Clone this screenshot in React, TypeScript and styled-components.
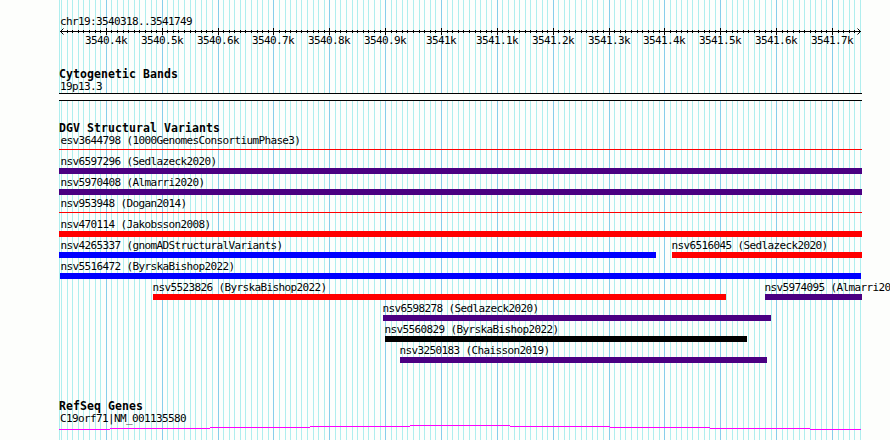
import React from "react";
import styled, { createGlobalStyle } from "styled-components";

const START = 3540318;
const END = 3541750;
const LEFT = 60;
const SPAN = 800;
const toX = (bp: number) => Math.round(LEFT + ((bp - START) * SPAN) / (END - START));

const marks: { bp: number; x: number; major: boolean }[] = [];
for (let bp = 3540320; bp <= END; bp += 10) {
  marks.push({ bp, x: toX(bp), major: bp % 100 === 0 });
}

const GlobalStyle = createGlobalStyle`
  body { margin: 0; background: #fdfefc; }
`;

const Browser = styled.main`
  position: relative;
  isolation: isolate;
  width: 890px;
  height: 440px;
  overflow: hidden;
  background: #fdfefc;
  color: #000;
  font: 11px/17px "DejaVu Sans Mono", monospace;
  letter-spacing: -0.623px;
  white-space: pre;
`;

const GridLines = styled.svg`
  position: absolute;
  inset: 0;
  z-index: -1;
`;

const Region = styled.div`
  height: 15px;
  padding: 13px 0 0 60px;
`;

const Axis = styled.svg`
  display: block;
  width: 890px;
  height: 22px;
`;

const Track = styled.section<{ $gap: number }>`
  margin-top: ${(p) => p.$gap}px;
`;

const Title = styled.h2`
  margin: 0;
  height: 12px;
  padding-left: 59px;
  font: bold 11.5px/16px "DejaVu Sans Mono", monospace;
  letter-spacing: 0.077px;
`;

const Caption = styled.div`
  height: 15px;
  padding-left: 60px;
`;

const Band = styled.div`
  box-sizing: border-box;
  width: 803px;
  height: 8px;
  margin-left: 59px;
  border: solid #000;
  border-width: 1px 0;
  background: #fdfefc;
`;

const Row = styled.div`
  display: flex;
  height: 21px;
`;

const Variant = styled.div<{ $gap: number; $width: number }>`
  flex: none;
  width: ${(p) => p.$width}px;
  margin-left: ${(p) => p.$gap}px;
`;

const Label = styled.div<{ $shift: number }>`
  height: 15px;
  margin-left: ${(p) => p.$shift}px;
`;

const Bar = styled.div<{ $color: string; $thin?: boolean }>`
  height: ${(p) => (p.$thin ? 1 : 6)}px;
  margin-top: ${(p) => (p.$thin ? 2 : 0)}px;
  background: ${(p) => p.$color};
`;

const GenePlot = styled.svg`
  display: block;
  width: 890px;
  height: 15px;
`;

const RED = "#ff0000";
const BLUE = "#0000ff";
const PURPLE = "#4b0082";

type Item = { name: string; from: number; to: number; color: string; thin?: boolean };

const rows: Item[][] = [
  [{ name: "esv3644798 (1000GenomesConsortiumPhase3)", from: 59, to: 862, color: RED, thin: true }],
  [{ name: "nsv6597296 (Sedlazeck2020)", from: 59, to: 862, color: PURPLE }],
  [{ name: "nsv5970408 (Almarri2020)", from: 59, to: 862, color: PURPLE }],
  [{ name: "nsv953948 (Dogan2014)", from: 59, to: 862, color: RED, thin: true }],
  [{ name: "nsv470114 (Jakobsson2008)", from: 59, to: 862, color: RED }],
  [
    { name: "nsv4265337 (gnomADStructuralVariants)", from: 59, to: 656, color: BLUE },
    { name: "nsv6516045 (Sedlazeck2020)", from: 672, to: 862, color: RED },
  ],
  [{ name: "nsv5516472 (ByrskaBishop2022)", from: 60, to: 861, color: BLUE }],
  [
    { name: "nsv5523826 (ByrskaBishop2022)", from: 153, to: 726, color: RED },
    { name: "nsv5974095 (Almarri2020)", from: 765, to: 862, color: PURPLE },
  ],
  [{ name: "nsv6598278 (Sedlazeck2020)", from: 383, to: 771, color: PURPLE }],
  [{ name: "nsv5560829 (ByrskaBishop2022)", from: 385, to: 747, color: "#000000" }],
  [{ name: "nsv3250183 (Chaisson2019)", from: 400, to: 767, color: PURPLE }],
];

const labelShift = (from: number) => (from <= 60 ? 60.4 - from : -0.6);

const VariantRow = ({ items }: { items: Item[] }) => (
  <Row>
    {items.map((v, i) => (
      <Variant key={v.name} $gap={v.from - (i ? items[i - 1].to : 0)} $width={v.to - v.from}>
        <Label $shift={labelShift(v.from)}>{v.name}</Label>
        <Bar $color={v.color} $thin={v.thin} />
      </Variant>
    ))}
  </Row>
);

export default function App() {
  return (
    <Browser>
      <GlobalStyle />
      <GridLines width="890" height="440" shapeRendering="crispEdges">
        <rect x="59" y="0" width="1" height="440" fill="#afeeee" />
        {marks.map((m) => (
          <rect key={m.bp} x={m.x} y="0" width="1" height="440" fill={m.major ? "#87ceeb" : "#afeeee"} />
        ))}
      </GridLines>

      <Region>chr19:3540318..3541749</Region>
      <Axis viewBox="0 28 890 22">
        <g shapeRendering="crispEdges">
          <rect x="60" y="31" width="801" height="1" />
          {marks.slice(1, -1).map((m) => (
            <rect key={m.bp} x={m.x} y={m.major ? 28 : 30} width="1" height={m.major ? 7 : 3} />
          ))}
        </g>
        <path d="M63.5 28.5L60.5 31.5L63.5 34.5M857.5 28.5L860.5 31.5L857.5 34.5" fill="none" stroke="#000" />
        {marks
          .filter((m) => m.major)
          .map((m) => (
            <text key={m.bp} x={m.x - 21 + (m.bp % 1000 ? 0 : 6)} y="44">
              {m.bp / 1000}k
            </text>
          ))}
      </Axis>

      <Track $gap={16}>
        <Title>Cytogenetic Bands</Title>
        <Caption>19p13.3</Caption>
        <Band />
      </Track>

      <Track $gap={19}>
        <Title>DGV Structural Variants</Title>
        {rows.map((items) => (
          <VariantRow key={items[0].name} items={items} />
        ))}
      </Track>

      <Track $gap={35}>
        <Title>RefSeq Genes</Title>
        <Caption>C19orf71|NM_001135580</Caption>
        <GenePlot viewBox="0 425 890 15" shapeRendering="crispEdges">
          <path
            d="M59 429.5H110M110 428.5H210M210 427.5H310M310 426.5H410M410 425.5H510M510 426.5H610M610 427.5H710M710 428.5H810M810 429.5H861"
            fill="none"
            stroke="#ff00ff"
          />
        </GenePlot>
      </Track>
    </Browser>
  );
}
